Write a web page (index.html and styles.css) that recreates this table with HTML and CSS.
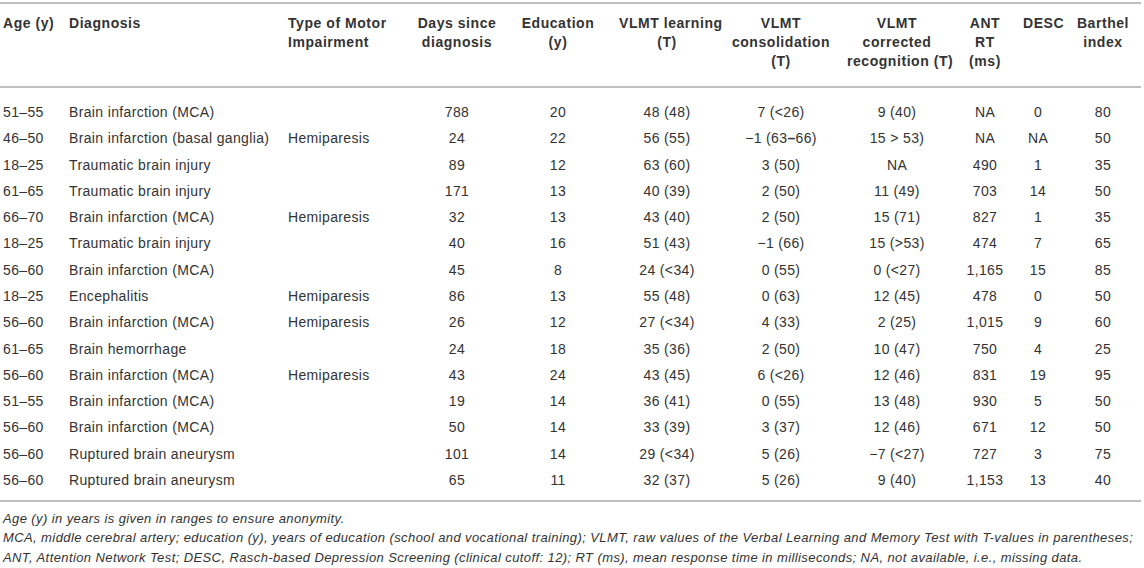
FILE: index.html
```html
<!DOCTYPE html>
<html lang="en">
<head>
<meta charset="utf-8">
<title>Patient characteristics</title>
<link rel="stylesheet" href="styles.css">
</head>
<body>
<div class="wrap">
<table class="data">
<colgroup>
<col class="c-age"><col class="c-diag"><col class="c-type"><col class="c-days"><col class="c-edu"><col class="c-learn"><col class="c-cons"><col class="c-corr"><col class="c-ant"><col class="c-desc"><col class="c-bart">
</colgroup>
<thead>
<tr>
<th class="l">Age (y)</th>
<th class="l">Diagnosis</th>
<th class="l">Type of Motor<br>Impairment</th>
<th>Days since<br>diagnosis</th>
<th>Education<br>(y)</th>
<th>VLMT learning<br>(T)</th>
<th>VLMT<br>consolidation<br>(T)</th>
<th>VLMT<br>corrected<br>recognition (T)</th>
<th>ANT<br>RT<br>(ms)</th>
<th>DESC</th>
<th class="bart">Barthel<br>index</th>
</tr>
</thead>
<tbody>
<tr><td class="l">51–55</td><td class="l">Brain infarction (MCA)</td><td class="l"></td><td>788</td><td>20</td><td>48 (48)</td><td>7 (&lt;26)</td><td>9 (40)</td><td>NA</td><td>0</td><td class="bart">80</td></tr>
<tr><td class="l">46–50</td><td class="l">Brain infarction (basal ganglia)</td><td class="l">Hemiparesis</td><td>24</td><td>22</td><td>56 (55)</td><td>−1 (63<b>–</b>66)</td><td>15 &gt; 53)</td><td>NA</td><td>NA</td><td class="bart">50</td></tr>
<tr><td class="l">18–25</td><td class="l">Traumatic brain injury</td><td class="l"></td><td>89</td><td>12</td><td>63 (60)</td><td>3 (50)</td><td>NA</td><td>490</td><td>1</td><td class="bart">35</td></tr>
<tr><td class="l">61–65</td><td class="l">Traumatic brain injury</td><td class="l"></td><td>171</td><td>13</td><td>40 (39)</td><td>2 (50)</td><td>11 (49)</td><td>703</td><td>14</td><td class="bart">50</td></tr>
<tr><td class="l">66–70</td><td class="l">Brain infarction (MCA)</td><td class="l">Hemiparesis</td><td>32</td><td>13</td><td>43 (40)</td><td>2 (50)</td><td>15 (71)</td><td>827</td><td>1</td><td class="bart">35</td></tr>
<tr><td class="l">18–25</td><td class="l">Traumatic brain injury</td><td class="l"></td><td>40</td><td>16</td><td>51 (43)</td><td>−1 (66)</td><td>15 (&gt;53)</td><td>474</td><td>7</td><td class="bart">65</td></tr>
<tr><td class="l">56–60</td><td class="l">Brain infarction (MCA)</td><td class="l"></td><td>45</td><td>8</td><td>24 (&lt;34)</td><td>0 (55)</td><td>0 (&lt;27)</td><td>1,165</td><td>15</td><td class="bart">85</td></tr>
<tr><td class="l">18–25</td><td class="l">Encephalitis</td><td class="l">Hemiparesis</td><td>86</td><td>13</td><td>55 (48)</td><td>0 (63)</td><td>12 (45)</td><td>478</td><td>0</td><td class="bart">50</td></tr>
<tr><td class="l">56–60</td><td class="l">Brain infarction (MCA)</td><td class="l">Hemiparesis</td><td>26</td><td>12</td><td>27 (&lt;34)</td><td>4 (33)</td><td>2 (25)</td><td>1,015</td><td>9</td><td class="bart">60</td></tr>
<tr><td class="l">61–65</td><td class="l">Brain hemorrhage</td><td class="l"></td><td>24</td><td>18</td><td>35 (36)</td><td>2 (50)</td><td>10 (47)</td><td>750</td><td>4</td><td class="bart">25</td></tr>
<tr><td class="l">56–60</td><td class="l">Brain infarction (MCA)</td><td class="l">Hemiparesis</td><td>43</td><td>24</td><td>43 (45)</td><td>6 (&lt;26)</td><td>12 (46)</td><td>831</td><td>19</td><td class="bart">95</td></tr>
<tr><td class="l">51–55</td><td class="l">Brain infarction (MCA)</td><td class="l"></td><td>19</td><td>14</td><td>36 (41)</td><td>0 (55)</td><td>13 (48)</td><td>930</td><td>5</td><td class="bart">50</td></tr>
<tr><td class="l">56–60</td><td class="l">Brain infarction (MCA)</td><td class="l"></td><td>50</td><td>14</td><td>33 (39)</td><td>3 (37)</td><td>12 (46)</td><td>671</td><td>12</td><td class="bart">50</td></tr>
<tr><td class="l">56–60</td><td class="l">Ruptured brain aneurysm</td><td class="l"></td><td>101</td><td>14</td><td>29 (&lt;34)</td><td>5 (26)</td><td>−7 (&lt;27)</td><td>727</td><td>3</td><td class="bart">75</td></tr>
<tr><td class="l">56–60</td><td class="l">Ruptured brain aneurysm</td><td class="l"></td><td>65</td><td>11</td><td>32 (37)</td><td>5 (26)</td><td>9 (40)</td><td>1,153</td><td>13</td><td class="bart">40</td></tr>
</tbody>
</table>
<div class="notes">
<p>Age (y) in years is given in ranges to ensure anonymity.</p>
<p><span class="line">MCA, middle cerebral artery; education (y), years of education (school and vocational training); VLMT, raw values of the Verbal Learning and Memory Test with T-values in parentheses;</span><span class="line">ANT, Attention Network Test; DESC, Rasch-based Depression Screening (clinical cutoff: 12); RT (ms), mean response time in milliseconds; NA, not available, i.e., missing data.</span></p>
</div>
</div>
</body>
</html>
```

FILE: styles.css
```css
html, body {
  margin: 0;
  padding: 0;
  background: #ffffff;
}
body {
  font-family: "Liberation Sans", Arial, sans-serif;
  color: #333333;
}
.wrap {
  width: 1141px;
  padding-top: 2px;
}
.data {
  width: 1141px;
  table-layout: fixed;
  border-collapse: collapse;
  font-size: 14px;
  line-height: 20px;
  letter-spacing: 0.35px;
}
.c-age { width: 66px; }
.c-diag { width: 219px; }
.c-type { width: 132px; }
.c-days { width: 80px; }
.c-edu { width: 122px; }
.c-learn { width: 96px; }
.c-cons { width: 132px; }
.c-corr { width: 100px; }
.c-ant { width: 76px; }
.c-desc { width: 30px; }
.c-bart { width: 88px; }

.data thead tr {
  border-top: 2px solid #bfbfbf;
  border-bottom: 2px solid #bfbfbf;
}
.data tbody tr:last-child {
  border-bottom: 2px solid #bfbfbf;
}
.data th {
  font-weight: bold;
  text-align: center;
  vertical-align: top;
  line-height: 19px;
  letter-spacing: 0.55px;
  padding: 10px 0 15px 0;
  white-space: nowrap;
}
.data td {
  text-align: center;
  padding: 3.15px 0;
  white-space: nowrap;
}
.data .l {
  text-align: left;
  padding-left: 3px;
}
.data .bart {
  padding-left: 12px;
}
.data tbody tr:first-child td {
  padding-top: 14px;
}
.data tbody tr:last-child td {
  padding-bottom: 10px;
}
.data td b {
  font-weight: bold;
}
.notes {
  font-size: 13px;
  font-style: italic;
  line-height: 19.5px;
  letter-spacing: 0.4px;
  padding-left: 3px;
  margin-top: 7px;
}
.notes p {
  margin: 0;
}
.notes .line {
  display: block;
  white-space: nowrap;
}
```
